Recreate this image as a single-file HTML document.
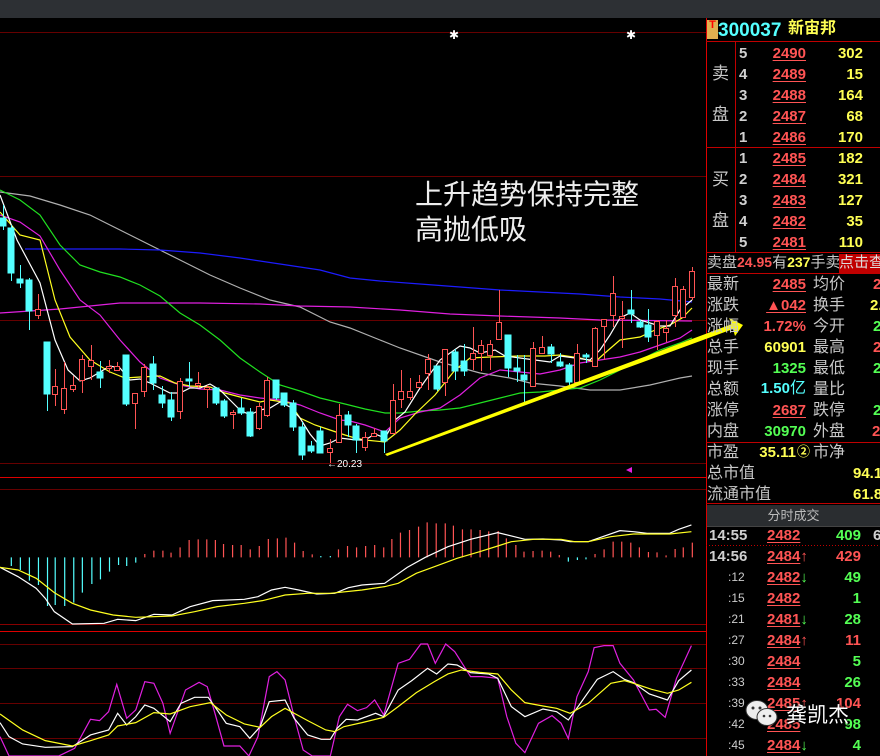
<!DOCTYPE html>
<html><head><meta charset="utf-8"><style>
*{margin:0;padding:0}
body{width:880px;height:756px;background:#000;overflow:hidden;position:relative;font-family:"Liberation Sans","Noto Sans CJK SC",sans-serif}
.top{position:absolute;left:0;top:0;width:880px;height:18px;background:#2d3034}
.t{position:absolute;white-space:nowrap;line-height:1}
.lb{color:#c8c8c8;font-size:16px}
.r{color:#ff5454;font-weight:bold;font-size:15px}
.y{color:#ffff54;font-weight:bold;font-size:15px}
.g{color:#54ff54;font-weight:bold;font-size:15px}
.w{color:#d0d0d0;font-weight:bold;font-size:15px}
.u{text-decoration:underline;text-underline-offset:2px}
.ra{text-align:right}
</style></head><body>
<div class="top"></div>
<svg width="880" height="756" style="position:absolute;left:0;top:0">
<g stroke-width="1" shape-rendering="crispEdges">
<line x1="0" y1="32.5" x2="706" y2="32.5" stroke="#600"/>
<line x1="0" y1="176.5" x2="706" y2="176.5" stroke="#600"/>
<line x1="0" y1="320.5" x2="706" y2="320.5" stroke="#600"/>
<line x1="0" y1="463.5" x2="706" y2="463.5" stroke="#600"/>
<line x1="0" y1="477.5" x2="706" y2="477.5" stroke="#d00"/>
<line x1="0" y1="489.5" x2="706" y2="489.5" stroke="#600"/>
<line x1="0" y1="624.5" x2="706" y2="624.5" stroke="#800"/>
<line x1="0" y1="631.5" x2="706" y2="631.5" stroke="#d00"/>
<line x1="0" y1="644.5" x2="706" y2="644.5" stroke="#600"/>
<line x1="0" y1="668.5" x2="706" y2="668.5" stroke="#600"/>
<line x1="0" y1="703.5" x2="706" y2="703.5" stroke="#600"/>
<line x1="0" y1="738.5" x2="706" y2="738.5" stroke="#600"/>
<line x1="706.5" y1="18" x2="706.5" y2="756" stroke="#d00"/>
</g>
<text x="449" y="39" fill="#fff" font-size="12">✱</text>
<text x="626" y="39" fill="#fff" font-size="12">✱</text>
<!-- MAs -->
<g fill="none" stroke-width="1.2">
<polyline stroke="#b0b0b0" points="0,192 30,196 60,205 90,215 120,230 150,245 180,260 210,275 240,288 270,300 300,307 330,322 350,328 380,340 400,348 440,362 480,373 510,378 530,383 560,386 590,390 620,390 650,385 680,378 692,376"/>
<polyline stroke="#1c1cff" points="25,249 120,249 160,250 200,253 240,258 280,264 320,270 350,278 380,281 420,284 460,287 500,290 540,292 580,294 620,297 660,299 692,302"/>
<polyline stroke="#e020e0" points="0,313 60,309 120,303 200,303 260,304 300,306 350,307 400,310 450,314 500,316 560,318 600,320 692,321"/>
<polyline stroke="#20e020" points="0,190 20,200 40,215 60,245 80,265 100,272 120,277 140,285 160,296 180,313 200,325 220,340 240,358 260,372 280,385 300,391 320,398 345,404 365,409 385,413 400,413 420,411 440,410 460,408 480,403 500,398 520,393 540,392 560,390 580,388 600,380 620,370 640,360 660,350 680,343 692,338"/>
<polyline stroke="#e020e0" points="0,215 20,222 40,236 60,270 80,300 100,315 120,340 140,362 160,378 180,385 200,389 220,390 240,395 260,398 280,400 300,405 320,413 340,420 350,421 365,425 385,432 400,418 420,412 440,408 460,395 480,378 500,370 520,372 540,374 560,370 580,363 600,360 620,357 640,352 660,345 680,338 692,330"/>
<polyline stroke="#ffff20" points="0,212 20,235 40,240 55,300 70,337 90,360 110,372 125,378 140,377 160,376 175,383 190,386 210,387 225,393 240,397 260,402 270,400 290,403 300,418 315,425 330,430 345,435 355,438 365,440 385,442 400,430 415,414 435,395 455,370 470,358 490,357 520,356 545,356 560,355 580,358 595,362 605,353 620,340 640,337 655,330 670,325 682,318 692,308"/>
<polyline stroke="#fff" points="0,195 17,240 40,283 55,340 68,370 80,381 90,378 100,372 110,366 120,368 130,380 140,379 150,383 160,388 170,393 180,393 190,388 200,388 210,384 220,390 230,400 240,410 250,415 260,410 270,408 280,402 290,407 300,418 310,434 320,446 330,443 340,438 356,440 365,440 375,434 385,438 395,420 405,412 420,388 440,360 460,346 470,348 480,353 495,350 505,356 520,358 535,360 550,362 560,356 575,358 590,360 600,350 610,335 620,318 630,313 640,320 650,323 660,326 670,326 680,310 692,300"/>
</g>
<!-- candles -->
<g stroke-width="1" shape-rendering="crispEdges">
<g stroke="#54ffff" fill="#54ffff">
<line x1="3.5" y1="205" x2="3.5" y2="230"/><rect x="0" y="218" width="6" height="8"/>
<line x1="11.5" y1="225" x2="11.5" y2="281"/><rect x="8" y="228" width="6" height="45"/>
<line x1="20.5" y1="265" x2="20.5" y2="288"/><rect x="17" y="279" width="6" height="4"/>
<line x1="29.5" y1="278" x2="29.5" y2="330"/><rect x="26" y="280" width="6" height="31"/>
<line x1="47.5" y1="342" x2="47.5" y2="411"/><rect x="44" y="342" width="6" height="52"/>
<line x1="100.5" y1="361" x2="100.5" y2="388"/><rect x="97" y="372" width="6" height="6"/>
<line x1="126.5" y1="355" x2="126.5" y2="406"/><rect x="123" y="355" width="6" height="49"/>
<line x1="153.5" y1="356" x2="153.5" y2="390"/><rect x="150" y="364" width="6" height="19"/>
<line x1="162.5" y1="386" x2="162.5" y2="408"/><rect x="159" y="395" width="6" height="8"/>
<line x1="171.5" y1="392" x2="171.5" y2="421"/><rect x="168" y="400" width="6" height="17"/>
<line x1="189.5" y1="362" x2="189.5" y2="387"/><rect x="186" y="379" width="6" height="2"/>
<line x1="216.5" y1="387" x2="216.5" y2="405"/><rect x="213" y="388" width="6" height="15"/>
<line x1="224.5" y1="399" x2="224.5" y2="418"/><rect x="221" y="401" width="6" height="15"/>
<line x1="241.5" y1="398" x2="241.5" y2="415"/><rect x="238" y="408" width="6" height="5"/>
<line x1="250.5" y1="408" x2="250.5" y2="437"/><rect x="247" y="412" width="6" height="24"/>
<line x1="276.5" y1="380" x2="276.5" y2="400"/><rect x="273" y="380" width="6" height="18"/>
<line x1="284.5" y1="393" x2="284.5" y2="407"/><rect x="281" y="393" width="6" height="12"/>
<line x1="293.5" y1="400" x2="293.5" y2="431"/><rect x="290" y="403" width="6" height="24"/>
<line x1="302.5" y1="422" x2="302.5" y2="460"/><rect x="299" y="427" width="6" height="28"/>
<line x1="311.5" y1="441" x2="311.5" y2="453"/><rect x="308" y="446" width="6" height="5"/>
<line x1="320.5" y1="427" x2="320.5" y2="453"/><rect x="317" y="431" width="6" height="22"/>
<line x1="348.5" y1="411" x2="348.5" y2="437"/><rect x="345" y="415" width="6" height="10"/>
<line x1="356.5" y1="424" x2="356.5" y2="453"/><rect x="353" y="426" width="6" height="14"/>
<line x1="384.5" y1="431" x2="384.5" y2="453"/><rect x="381" y="431" width="6" height="10"/>
<line x1="437.5" y1="366" x2="437.5" y2="391"/><rect x="434" y="366" width="6" height="23"/>
<line x1="455.5" y1="349" x2="455.5" y2="380"/><rect x="452" y="352" width="6" height="19"/>
<line x1="464.5" y1="344" x2="464.5" y2="376"/><rect x="461" y="361" width="6" height="10"/>
<line x1="508.5" y1="335" x2="508.5" y2="377"/><rect x="505" y="335" width="6" height="33"/>
<line x1="517.5" y1="355" x2="517.5" y2="382"/><rect x="514" y="368" width="6" height="3"/>
<line x1="524.5" y1="355" x2="524.5" y2="403"/><rect x="521" y="375" width="6" height="5"/>
<line x1="551.5" y1="344" x2="551.5" y2="363"/><rect x="548" y="347" width="6" height="7"/>
<line x1="560.5" y1="353" x2="560.5" y2="367"/><rect x="557" y="362" width="6" height="4"/>
<line x1="569.5" y1="363" x2="569.5" y2="386"/><rect x="566" y="365" width="6" height="17"/>
<line x1="586.5" y1="353" x2="586.5" y2="363"/><rect x="583" y="355" width="6" height="2"/>
<line x1="631.5" y1="290" x2="631.5" y2="323"/><rect x="628" y="310" width="6" height="4"/>
<line x1="640.5" y1="320" x2="640.5" y2="328"/><rect x="637" y="322" width="6" height="5"/>
<line x1="648.5" y1="309" x2="648.5" y2="342"/><rect x="645" y="325" width="6" height="12"/>
</g>
<g stroke="#ff5454" fill="#000">
<line x1="38.5" y1="294" x2="38.5" y2="319"/><rect x="35.5" y="309.5" width="5" height="6"/>
<line x1="55.5" y1="369" x2="55.5" y2="406"/><rect x="52.5" y="386.5" width="5" height="8"/>
<line x1="64.5" y1="362" x2="64.5" y2="414"/><rect x="61.5" y="388.5" width="5" height="21"/>
<line x1="73.5" y1="376" x2="73.5" y2="392"/><rect x="70.5" y="385.5" width="5" height="4"/>
<line x1="82.5" y1="355" x2="82.5" y2="393"/><rect x="79.5" y="359.5" width="5" height="21"/>
<line x1="91.5" y1="345" x2="91.5" y2="380"/><rect x="88.5" y="360.5" width="5" height="6"/>
<line x1="109.5" y1="360" x2="109.5" y2="373"/><rect x="106.5" y="366.5" width="5" height="2"/>
<line x1="117.5" y1="362" x2="117.5" y2="371"/><rect x="114.5" y="366.5" width="5" height="4"/>
<line x1="135.5" y1="393" x2="135.5" y2="429"/><rect x="132.5" y="393.5" width="5" height="10"/>
<line x1="144.5" y1="364" x2="144.5" y2="397"/><rect x="141.5" y="367.5" width="5" height="24"/>
<line x1="180.5" y1="378" x2="180.5" y2="419"/><rect x="177.5" y="381.5" width="5" height="30"/>
<line x1="198.5" y1="372" x2="198.5" y2="388"/><rect x="195.5" y="383.5" width="5" height="2"/>
<line x1="207.5" y1="385" x2="207.5" y2="408"/><rect x="204.5" y="387.5" width="5" height="2"/>
<line x1="233.5" y1="410" x2="233.5" y2="429"/><rect x="230.5" y="412.5" width="5" height="2"/>
<line x1="259.5" y1="403" x2="259.5" y2="430"/><rect x="256.5" y="406.5" width="5" height="22"/>
<line x1="267.5" y1="377" x2="267.5" y2="417"/><rect x="264.5" y="380.5" width="5" height="35"/>
<line x1="330.5" y1="439" x2="330.5" y2="463"/><rect x="327.5" y="448.5" width="5" height="4"/>
<line x1="339.5" y1="404" x2="339.5" y2="442"/><rect x="336.5" y="415.5" width="5" height="27"/>
<line x1="365.5" y1="432" x2="365.5" y2="451"/><rect x="362.5" y="437.5" width="5" height="10"/>
<line x1="374.5" y1="428" x2="374.5" y2="437"/><rect x="371.5" y="433.5" width="5" height="3"/>
<line x1="393.5" y1="384" x2="393.5" y2="433"/><rect x="390.5" y="400.5" width="5" height="33"/>
<line x1="401.5" y1="370" x2="401.5" y2="408"/><rect x="398.5" y="391.5" width="5" height="8"/>
<line x1="410.5" y1="378" x2="410.5" y2="400"/><rect x="407.5" y="391.5" width="5" height="6"/>
<line x1="419.5" y1="375" x2="419.5" y2="388"/><rect x="416.5" y="382.5" width="5" height="5"/>
<line x1="428.5" y1="354" x2="428.5" y2="390"/><rect x="425.5" y="359.5" width="5" height="14"/>
<line x1="445.5" y1="349" x2="445.5" y2="396"/><rect x="442.5" y="349.5" width="5" height="33"/>
<line x1="473.5" y1="327" x2="473.5" y2="370"/><rect x="470.5" y="353.5" width="5" height="6"/>
<line x1="481.5" y1="340" x2="481.5" y2="371"/><rect x="478.5" y="345.5" width="5" height="8"/>
<line x1="490.5" y1="340" x2="490.5" y2="370"/><rect x="487.5" y="344.5" width="5" height="11"/>
<line x1="499.5" y1="290" x2="499.5" y2="340"/><rect x="496.5" y="322.5" width="5" height="17"/>
<line x1="533.5" y1="342" x2="533.5" y2="387"/><rect x="530.5" y="348.5" width="5" height="38"/>
<line x1="542.5" y1="336" x2="542.5" y2="353"/><rect x="539.5" y="347.5" width="5" height="6"/>
<line x1="577.5" y1="344" x2="577.5" y2="383"/><rect x="574.5" y="353.5" width="5" height="29"/>
<line x1="595.5" y1="327" x2="595.5" y2="367"/><rect x="592.5" y="328.5" width="5" height="38"/>
<line x1="604.5" y1="319" x2="604.5" y2="360"/><rect x="601.5" y="319.5" width="5" height="7"/>
<line x1="613.5" y1="276" x2="613.5" y2="327"/><rect x="610.5" y="293.5" width="5" height="22"/>
<line x1="622.5" y1="301" x2="622.5" y2="348"/><rect x="619.5" y="316.5" width="5" height="2"/>
<line x1="657.5" y1="320" x2="657.5" y2="350"/><rect x="654.5" y="321.5" width="5" height="14"/>
<line x1="666.5" y1="320" x2="666.5" y2="342"/><rect x="663.5" y="328.5" width="5" height="4"/>
<line x1="675.5" y1="278" x2="675.5" y2="327"/><rect x="672.5" y="286.5" width="5" height="29"/>
<line x1="683.5" y1="286" x2="683.5" y2="317"/><rect x="680.5" y="289.5" width="5" height="28"/>
<line x1="692.5" y1="267" x2="692.5" y2="300"/><rect x="689.5" y="271.5" width="5" height="26"/>
</g>
</g>
<polygon points="385,454 732,324 729,318 743,325 735,336 733,329 387,456" fill="#ffff00"/>
<text x="327" y="467" fill="#fff" font-size="10" font-family="Liberation Sans">←20.23</text>
<polygon points="626,470 632,467 632,473" fill="#e020e0"/>
<!-- MACD -->
<g transform="translate(0,470) scale(0.4525,0.3333)" fill="none" stroke-width="1.2">
<g stroke="#54ffff" vector-effect="non-scaling-stroke">
<path vector-effect="non-scaling-stroke" d="M25 262V288M45 262V300M65 262V332M85 262V345M105 262V408M122 262V405M143 262V408M163 262V398M182 262V368M203 262V342M222 262V328M242 262V305M262 262V285M280 262V288M300 262V278M709 262V258M730 262V258M1256 262V275M1276 262V270M1295 262V268"/>
</g>
<path stroke="#ff5454" vector-effect="non-scaling-stroke" d="M320 262V252M340 262V242M360 262V242M378 262V248M398 262V232M418 262V210M438 262V208M457 262V208M476 262V210M494 262V222M514 262V225M533 262V225M553 262V238M573 262V228M593 262V207M613 262V205M632 262V203M651 262V218M670 262V243M690 262V253M748 262V238M768 262V228M788 262V232M808 262V228M828 262V225M848 262V232M866 262V207M885 262V188M905 262V180M925 262V170M944 262V157M964 262V160M984 262V160M1002 262V167M1022 262V178M1041 262V178M1061 262V180M1080 262V184M1101 262V183M1119 262V205M1140 262V225M1158 262V245M1178 262V243M1198 262V242M1217 262V245M1236 262V255M1315 262V252M1335 262V238M1355 262V215M1374 262V215M1394 262V218M1413 262V232M1433 262V246M1452 262V247M1472 262V256M1492 262V237M1510 262V232M1530 262V218"/>
<polyline vector-effect="non-scaling-stroke" stroke="#fff" points="0,292 40,320 80,355 100,385 120,425 160,462 230,460 260,448 300,452 340,433 380,435 420,410 470,392 540,388 570,380 600,360 630,352 660,360 700,372 740,370 770,353 800,345 850,340 900,292 940,262 990,230 1040,208 1100,188 1160,208 1200,207 1240,210 1260,215 1300,215 1370,182 1400,185 1430,190 1480,190 1500,178 1528,165"/>
<polyline vector-effect="non-scaling-stroke" stroke="#ffff20" points="0,292 40,300 80,325 120,368 160,400 200,420 250,435 300,442 380,438 430,425 480,410 540,400 580,392 630,375 680,370 730,370 800,360 850,350 880,340 920,310 960,290 1010,265 1060,245 1100,228 1130,215 1180,208 1240,208 1270,215 1300,215 1350,200 1400,192 1480,192 1528,185"/>
<polyline vector-effect="non-scaling-stroke" stroke="#e020e0" points="0,800 20,858 130,858 165,835 200,748 220,752 240,725 258,643 280,745 300,720 320,635 340,640 360,700 376,790 410,660 440,637 458,650 475,730 495,828 530,828 550,858 570,800 595,620 612,605 630,630 650,740 670,840 690,858 730,858 750,740 768,703 790,722 810,713 828,690 848,735 880,580 905,568 930,522 945,522 962,580 985,522 1005,545 1040,620 1065,620 1100,625 1120,740 1140,820 1160,848 1190,760 1220,737 1240,760 1256,806 1275,680 1300,605 1313,533 1335,527 1355,527 1370,580 1400,630 1435,720 1450,718 1470,742 1495,625 1528,527"/>
<polyline vector-effect="non-scaling-stroke" stroke="#fff" points="0,758 20,800 50,822 100,832 160,830 200,795 240,780 260,730 280,765 300,740 320,705 340,715 376,755 400,700 430,682 460,682 480,720 500,760 530,770 552,805 575,770 595,695 630,690 650,745 680,795 710,808 730,808 745,775 765,748 790,750 830,730 848,740 880,660 910,632 945,595 965,612 990,582 1010,585 1040,608 1080,612 1100,625 1130,710 1160,740 1200,717 1230,725 1256,750 1280,705 1320,628 1355,605 1380,628 1400,638 1435,672 1475,690 1500,632 1528,600"/>
<polyline vector-effect="non-scaling-stroke" stroke="#ffff20" points="0,732 50,780 100,812 160,828 200,812 240,795 260,768 300,758 340,728 376,732 420,710 465,698 500,735 540,762 575,772 600,740 630,715 680,752 720,780 740,785 760,770 800,758 848,742 880,710 920,668 960,635 990,612 1020,600 1060,607 1100,612 1130,660 1160,698 1200,708 1230,715 1260,730 1300,700 1350,640 1380,632 1400,640 1440,658 1475,670 1500,660 1528,637"/>
</g>
<!-- right panel lines -->
<g stroke="#c00000" stroke-width="1" shape-rendering="crispEdges">
<line x1="706" y1="41.5" x2="880" y2="41.5"/>
<line x1="706" y1="147.5" x2="880" y2="147.5"/>
<line x1="706" y1="252.5" x2="880" y2="252.5"/>
<line x1="706" y1="273.5" x2="880" y2="273.5"/>
<line x1="706" y1="442.5" x2="880" y2="442.5"/>
<line x1="706" y1="503.5" x2="880" y2="503.5"/>
<line x1="735.5" y1="41" x2="735.5" y2="252"/>
<line x1="706" y1="545.5" x2="880" y2="545.5" stroke-dasharray="1,2"/>
</g>
<rect x="707" y="526" width="173" height="1" fill="#444"/>
</svg>
<div class="t" style="left:415px;top:179px;color:#eee;font-size:28px;font-family:'Noto Sans CJK SC',sans-serif">上升趋势保持完整</div>
<div class="t" style="left:415px;top:214px;color:#eee;font-size:28px;font-family:'Noto Sans CJK SC',sans-serif">高抛低吸</div>

<div class="t" style="left:707px;top:20px;width:11px;height:19px;background:#e0b050;color:#f00;font-size:11px;font-weight:bold;text-align:center">T</div>
<div class="t" style="left:718px;top:21px;color:#54ffff;font-size:19px;font-weight:bold">300037</div>
<div class="t" style="left:788px;top:21px;color:#ffff54;font-size:16px;font-weight:bold">新宙邦</div>

<div class="t lb" style="left:712px;top:65px;font-size:17px">卖</div>
<div class="t lb" style="left:712px;top:106px;font-size:17px">盘</div>
<div class="t lb" style="left:712px;top:171px;font-size:17px">买</div>
<div class="t lb" style="left:712px;top:212px;font-size:17px">盘</div>

<div style="position:absolute;left:739px;top:46px;width:125px">
<div class="t w" style="top:0">5</div><div class="t r u ra" style="top:0;left:25px;width:42px">2490</div><div class="t y ra" style="top:0;left:70px;width:54px">302</div>
<div class="t w" style="top:21px">4</div><div class="t r u ra" style="top:21px;left:25px;width:42px">2489</div><div class="t y ra" style="top:21px;left:70px;width:54px">15</div>
<div class="t w" style="top:42px">3</div><div class="t r u ra" style="top:42px;left:25px;width:42px">2488</div><div class="t y ra" style="top:42px;left:70px;width:54px">164</div>
<div class="t w" style="top:63px">2</div><div class="t r u ra" style="top:63px;left:25px;width:42px">2487</div><div class="t y ra" style="top:63px;left:70px;width:54px">68</div>
<div class="t w" style="top:84px">1</div><div class="t r u ra" style="top:84px;left:25px;width:42px">2486</div><div class="t y ra" style="top:84px;left:70px;width:54px">170</div>
<div class="t w" style="top:105px">1</div><div class="t r u ra" style="top:105px;left:25px;width:42px">2485</div><div class="t y ra" style="top:105px;left:70px;width:54px">182</div>
<div class="t w" style="top:126px">2</div><div class="t r u ra" style="top:126px;left:25px;width:42px">2484</div><div class="t y ra" style="top:126px;left:70px;width:54px">321</div>
<div class="t w" style="top:147px">3</div><div class="t r u ra" style="top:147px;left:25px;width:42px">2483</div><div class="t y ra" style="top:147px;left:70px;width:54px">127</div>
<div class="t w" style="top:168px">4</div><div class="t r u ra" style="top:168px;left:25px;width:42px">2482</div><div class="t y ra" style="top:168px;left:70px;width:54px">35</div>
<div class="t w" style="top:189px">5</div><div class="t r u ra" style="top:189px;left:25px;width:42px">2481</div><div class="t y ra" style="top:189px;left:70px;width:54px">110</div>
</div>

<div class="t" style="left:707px;top:255px;font-size:15px"><span class="lb" style="font-size:15px">卖盘</span><span class="r" style="font-size:14px">24.95</span><span class="lb" style="font-size:15px">有</span><span class="y" style="font-size:14px">237</span><span class="lb" style="font-size:15px">手卖</span></div>
<div class="t" style="left:839px;top:254px;width:41px;height:19px;background:#c00000;color:#ddd;font-size:15px;padding-top:1px">点击查</div>

<div style="position:absolute;left:707px;top:277px">
<div class="t lb" style="top:0">最新</div><div class="t r u ra" style="top:0;left:50px;width:49px">2485</div><div class="t lb" style="top:0;left:106px">均价</div><div class="t r" style="top:0;left:166px">2</div>
<div class="t lb" style="top:21px">涨跌</div><div class="t r u ra" style="top:21px;left:50px;width:49px">▲042</div><div class="t lb" style="top:21px;left:106px">换手</div><div class="t y" style="top:21px;left:163px">2.</div>
<div class="t lb" style="top:42px">涨幅</div><div class="t r ra" style="top:42px;left:40px;width:59px">1.72%</div><div class="t lb" style="top:42px;left:106px">今开</div><div class="t g" style="top:42px;left:166px">2</div>
<div class="t lb" style="top:63px">总手</div><div class="t y ra" style="top:63px;left:40px;width:59px">60901</div><div class="t lb" style="top:63px;left:106px">最高</div><div class="t r" style="top:63px;left:166px">2</div>
<div class="t lb" style="top:84px">现手</div><div class="t g ra" style="top:84px;left:40px;width:59px">1325</div><div class="t lb" style="top:84px;left:106px">最低</div><div class="t g" style="top:84px;left:166px">2</div>
<div class="t lb" style="top:105px">总额</div><div class="t ra" style="top:104px;left:30px;width:69px;color:#54ffff;font-weight:bold;font-size:15px">1.50<span style="font-weight:normal;font-size:16px">亿</span></div><div class="t lb" style="top:105px;left:106px">量比</div>
<div class="t lb" style="top:126px">涨停</div><div class="t r u ra" style="top:126px;left:50px;width:49px">2687</div><div class="t lb" style="top:126px;left:106px">跌停</div><div class="t g" style="top:126px;left:166px">2</div>
<div class="t lb" style="top:147px">内盘</div><div class="t g ra" style="top:147px;left:40px;width:59px">30970</div><div class="t lb" style="top:147px;left:106px">外盘</div><div class="t r" style="top:147px;left:165px">29</div>
<div class="t lb" style="top:168px">市盈</div><div class="t y ra" style="top:168px;left:40px;width:49px">35.11</div><div class="t y" style="top:168px;left:90px;font-size:13px">②</div><div class="t lb" style="top:168px;left:106px">市净</div>
<div class="t lb" style="top:189px">总市值</div><div class="t y" style="top:189px;left:146px">94.1</div>
<div class="t lb" style="top:210px">流通市值</div><div class="t y" style="top:210px;left:146px">61.8</div>
</div>

<div class="t" style="left:707px;top:505px;width:173px;height:21px;background:#2a2d30;color:#bbb;font-size:13px;text-align:center;line-height:21px">分时成交</div>

<div style="position:absolute;left:709px;top:528px;font-size:15px">
<div class="t w" style="top:0">14:55</div><div class="t r u" style="top:0;left:58px">2482</div><div class="t g ra" style="top:0;left:110px;width:42px">409</div><div class="t w" style="top:0;left:164px">6</div>
<div class="t w" style="top:21px">14:56</div><div class="t r" style="top:21px;left:58px"><span class="u">2484</span>↑</div><div class="t r ra" style="top:21px;left:110px;width:42px">429</div>
<div class="t" style="top:43px;left:19px;color:#ccc;font-size:12px">:12</div><div class="t r" style="top:42px;left:58px"><span class="u">2482</span><span style="color:#54ff54">↓</span></div><div class="t g ra" style="top:42px;left:110px;width:42px">49</div>
<div class="t" style="top:64px;left:19px;color:#ccc;font-size:12px">:15</div><div class="t r u" style="top:63px;left:58px">2482</div><div class="t g ra" style="top:63px;left:110px;width:42px">1</div>
<div class="t" style="top:85px;left:19px;color:#ccc;font-size:12px">:21</div><div class="t r" style="top:84px;left:58px"><span class="u">2481</span><span style="color:#54ff54">↓</span></div><div class="t g ra" style="top:84px;left:110px;width:42px">28</div>
<div class="t" style="top:106px;left:19px;color:#ccc;font-size:12px">:27</div><div class="t r" style="top:105px;left:58px"><span class="u">2484</span>↑</div><div class="t r ra" style="top:105px;left:110px;width:42px">11</div>
<div class="t" style="top:127px;left:19px;color:#ccc;font-size:12px">:30</div><div class="t r u" style="top:126px;left:58px">2484</div><div class="t g ra" style="top:126px;left:110px;width:42px">5</div>
<div class="t" style="top:148px;left:19px;color:#ccc;font-size:12px">:33</div><div class="t r u" style="top:147px;left:58px">2484</div><div class="t g ra" style="top:147px;left:110px;width:42px">26</div>
<div class="t" style="top:169px;left:19px;color:#ccc;font-size:12px">:39</div><div class="t r" style="top:168px;left:58px"><span class="u">2485</span>↑</div><div class="t r ra" style="top:168px;left:110px;width:42px">104</div>
<div class="t" style="top:190px;left:19px;color:#ccc;font-size:12px">:42</div><div class="t r u" style="top:189px;left:58px">2485</div><div class="t g ra" style="top:189px;left:110px;width:42px">98</div>
<div class="t" style="top:211px;left:19px;color:#ccc;font-size:12px">:45</div><div class="t r" style="top:210px;left:58px"><span class="u">2484</span><span style="color:#54ff54">↓</span></div><div class="t g ra" style="top:210px;left:110px;width:42px">4</div>
</div>

<svg width="40" height="30" style="position:absolute;left:745px;top:698px">
<ellipse cx="12" cy="12" rx="11" ry="9.5" fill="#eee" stroke="#333"/>
<ellipse cx="22" cy="19" rx="10" ry="8.5" fill="#eee" stroke="#333"/>
<circle cx="8" cy="10" r="1.5" fill="#333"/><circle cx="15" cy="10" r="1.5" fill="#333"/>
<circle cx="19" cy="18" r="1.3" fill="#333"/><circle cx="25" cy="18" r="1.3" fill="#333"/>
</svg>
<div class="t" style="left:786px;top:704px;color:#fff;font-size:21px;font-family:'Noto Sans CJK SC',sans-serif;text-shadow:0 0 2px #000,1px 1px 1px #000">龚凯杰</div>
</body></html>
